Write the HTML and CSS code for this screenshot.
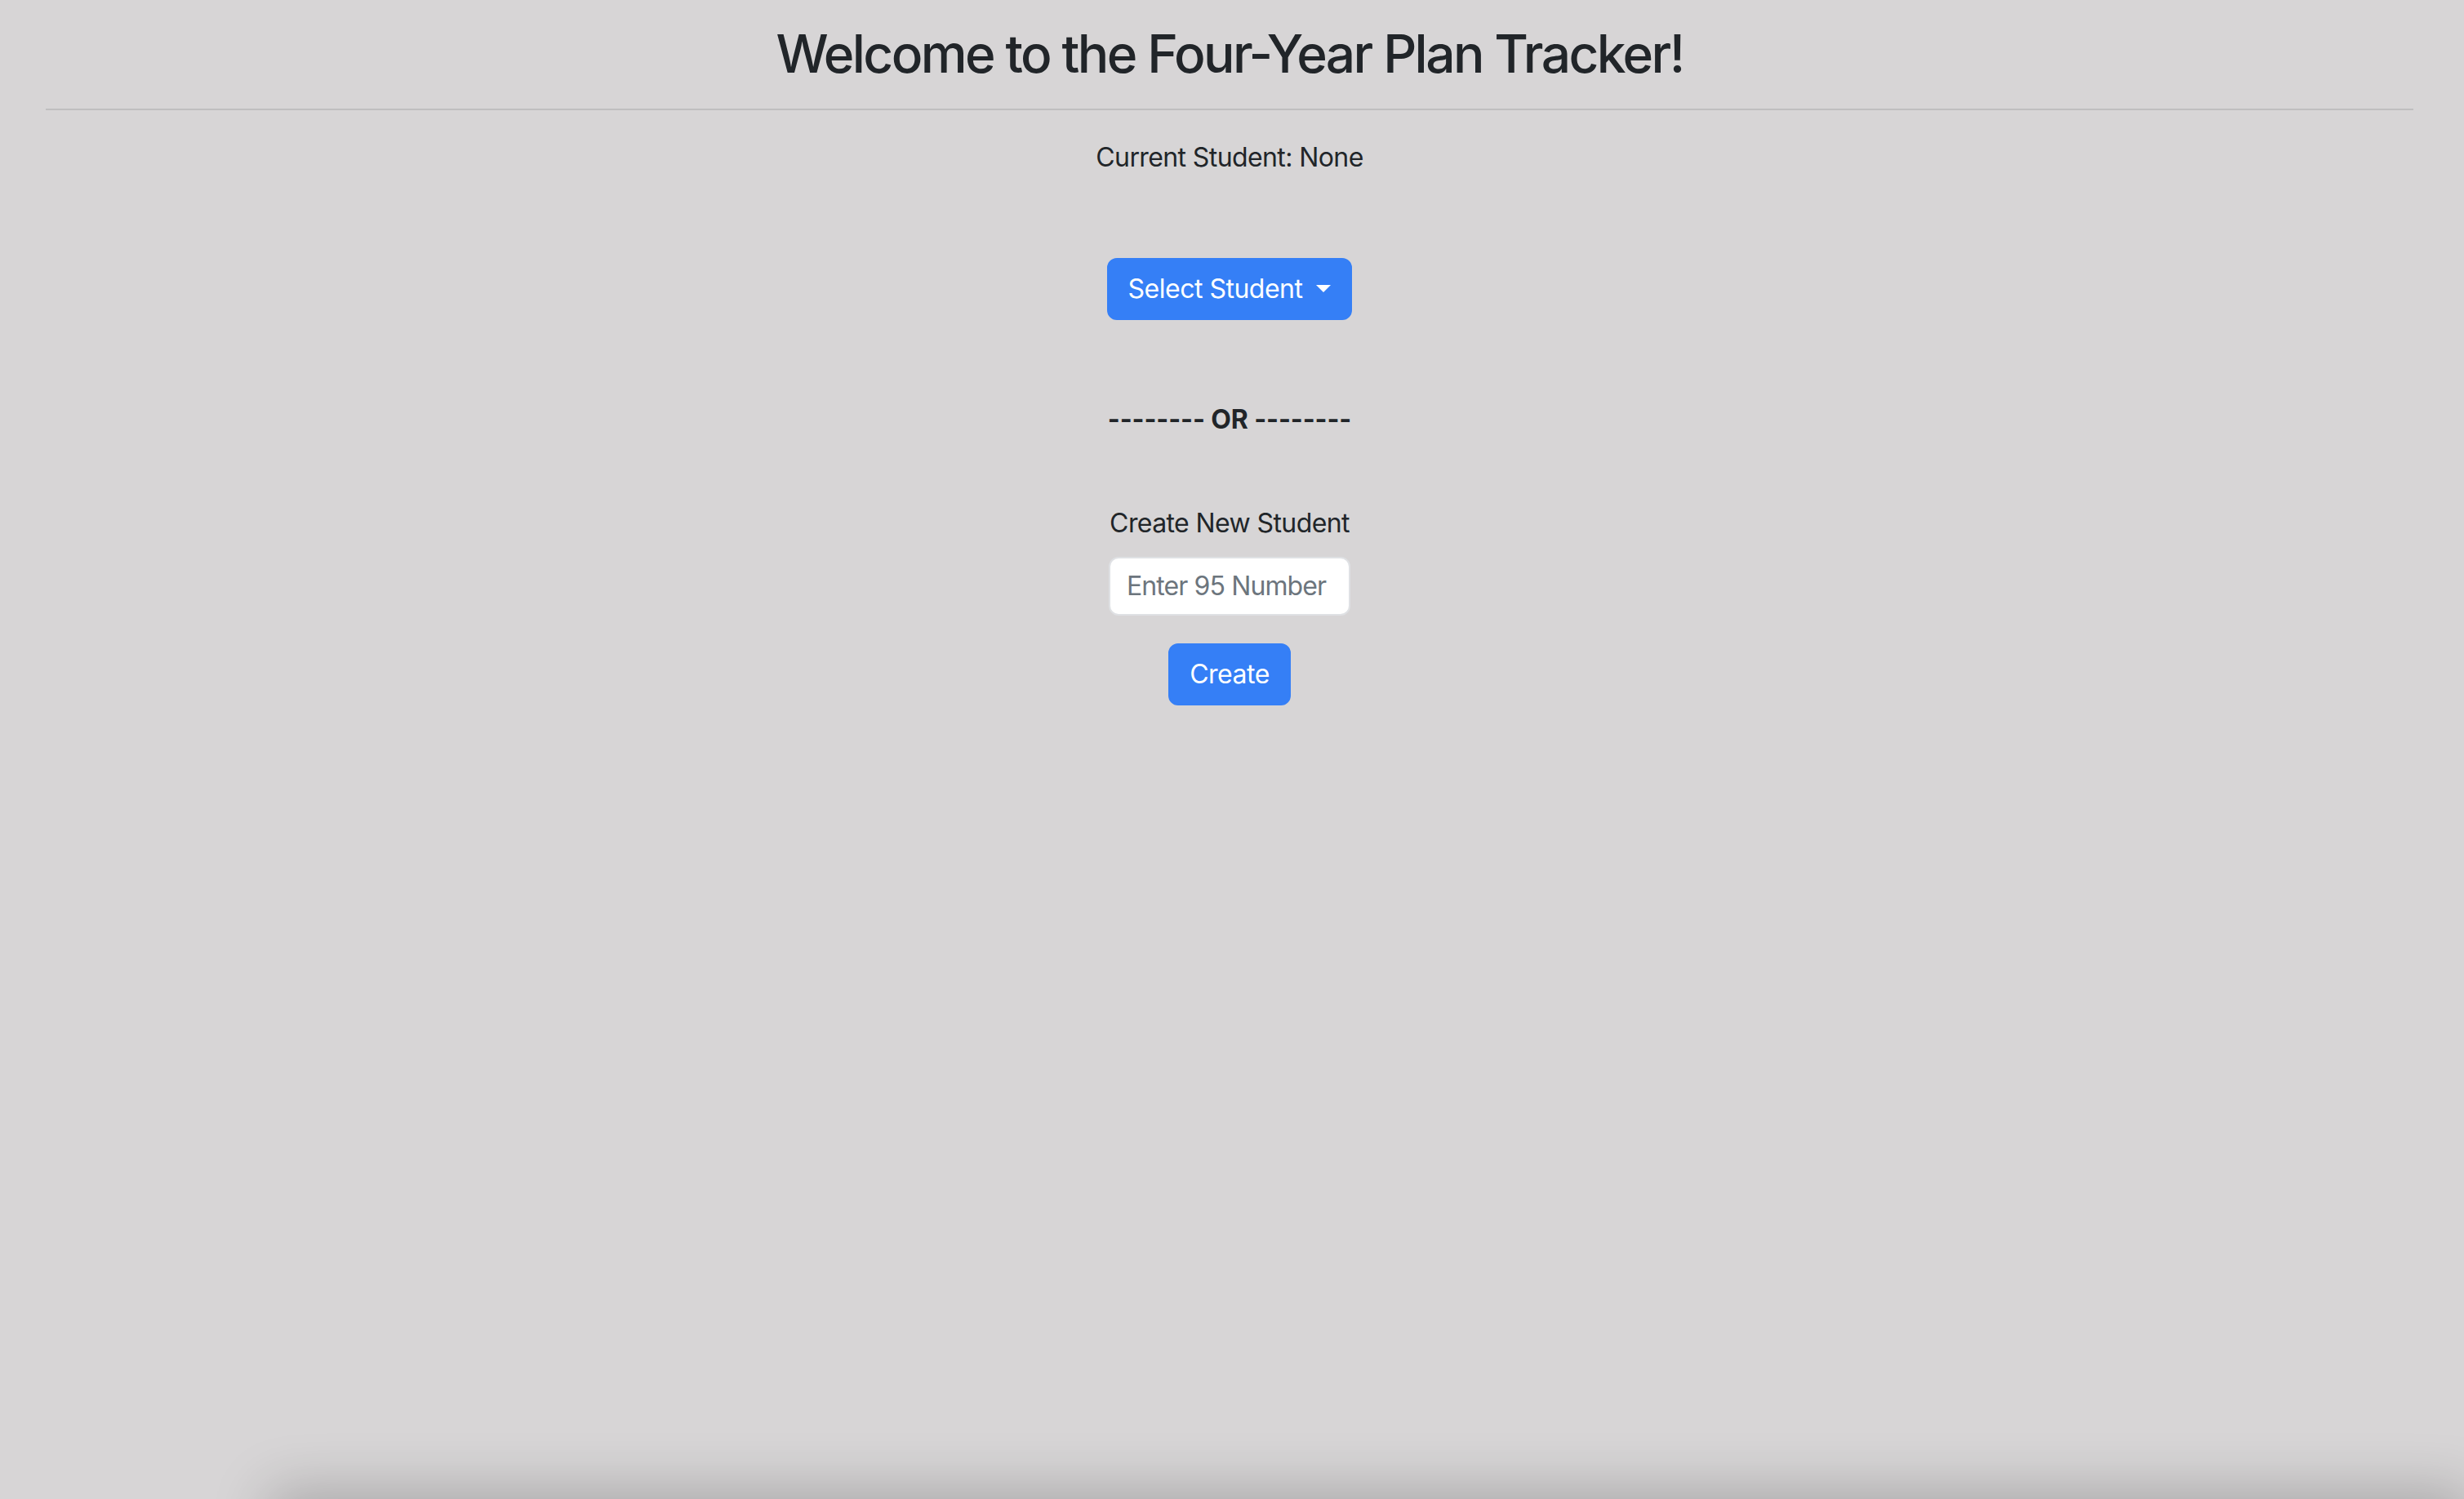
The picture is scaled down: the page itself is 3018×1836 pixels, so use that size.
FILE: index.html
```html
<!DOCTYPE html>
<html lang="en">
<head>
<meta charset="utf-8">
<title>Four-Year Plan Tracker</title>
<link rel="stylesheet" href="styles.css">
</head>
<body>
<main class="page">
  <h1 class="title">Welcome to the Four-Year Plan Tracker!</h1>
  <hr class="rule">
  <p class="current">Current Student: None</p>
  <button class="btn btn-select" type="button">Select Student<span class="caret"></span></button>
  <p class="or">-------- OR --------</p>
  <p class="label">Create New Student</p>
  <input class="field" type="text" placeholder="Enter 95 Number">
  <button class="btn btn-create" type="button">Create</button>
</main>
<div class="dock-shadow"></div>
</body>
</html>
```
FILE: styles.css
```css
html, body {
  margin: 0;
  padding: 0;
  height: 100%;
}
body {
  background: #d7d5d6;
  color: #212529;
  font-family: "Inter", "Noto Sans", sans-serif;
  font-size: 32px;
  line-height: 1.5;
  overflow: hidden;
}
.page {
  display: flex;
  flex-direction: column;
  align-items: center;
  padding: 0 62px 0 56px;
}
.title {
  margin: 28px 0 0;
  font-size: 64px;
  font-weight: 500;
  line-height: 1.2;
  letter-spacing: -2.6px;
}
.rule {
  align-self: stretch;
  margin: 28px 0 0;
  border: 0;
  border-top: 2px solid #bfbebf;
  height: 0;
}
.current {
  margin: 34px 0 0;
  letter-spacing: -0.6px;
}
.btn {
  font-family: inherit;
  font-size: 32px;
  line-height: 48px;
  color: #ffffff;
  background: #357ff6;
  border: 2px solid #357ff6;
  border-radius: 12px;
  padding: 12px 24px;
  letter-spacing: -0.5px;
  display: inline-flex;
  align-items: center;
}
.btn-select {
  margin-top: 99px;
}
.caret {
  display: inline-block;
  width: 0;
  height: 0;
  margin-left: 17px;
  border-top: 9px solid #ffffff;
  border-left: 9px solid transparent;
  border-right: 9px solid transparent;
}
.or {
  margin: 98px 0 0;
  font-weight: 700;
  letter-spacing: -0.1px;
}
.label {
  margin: 79px 0 0;
  letter-spacing: -0.6px;
}
.field {
  margin-top: 17px;
  box-sizing: border-box;
  width: 296px;
  height: 72px;
  padding: 12px 20px;
  font-family: inherit;
  font-size: 32px;
  letter-spacing: -0.9px;
  color: #212529;
  background: #ffffff;
  border: 2px solid #dfe1e4;
  border-radius: 12px;
  outline: none;
}
.field::placeholder {
  color: #6c757d;
}
.btn-create {
  margin-top: 34px;
}
.dock-shadow {
  position: fixed;
  left: 340px;
  right: 0;
  bottom: -120px;
  height: 120px;
  box-shadow: 0 0 70px 10px rgba(0, 0, 0, 0.22);
  pointer-events: none;
}
```
